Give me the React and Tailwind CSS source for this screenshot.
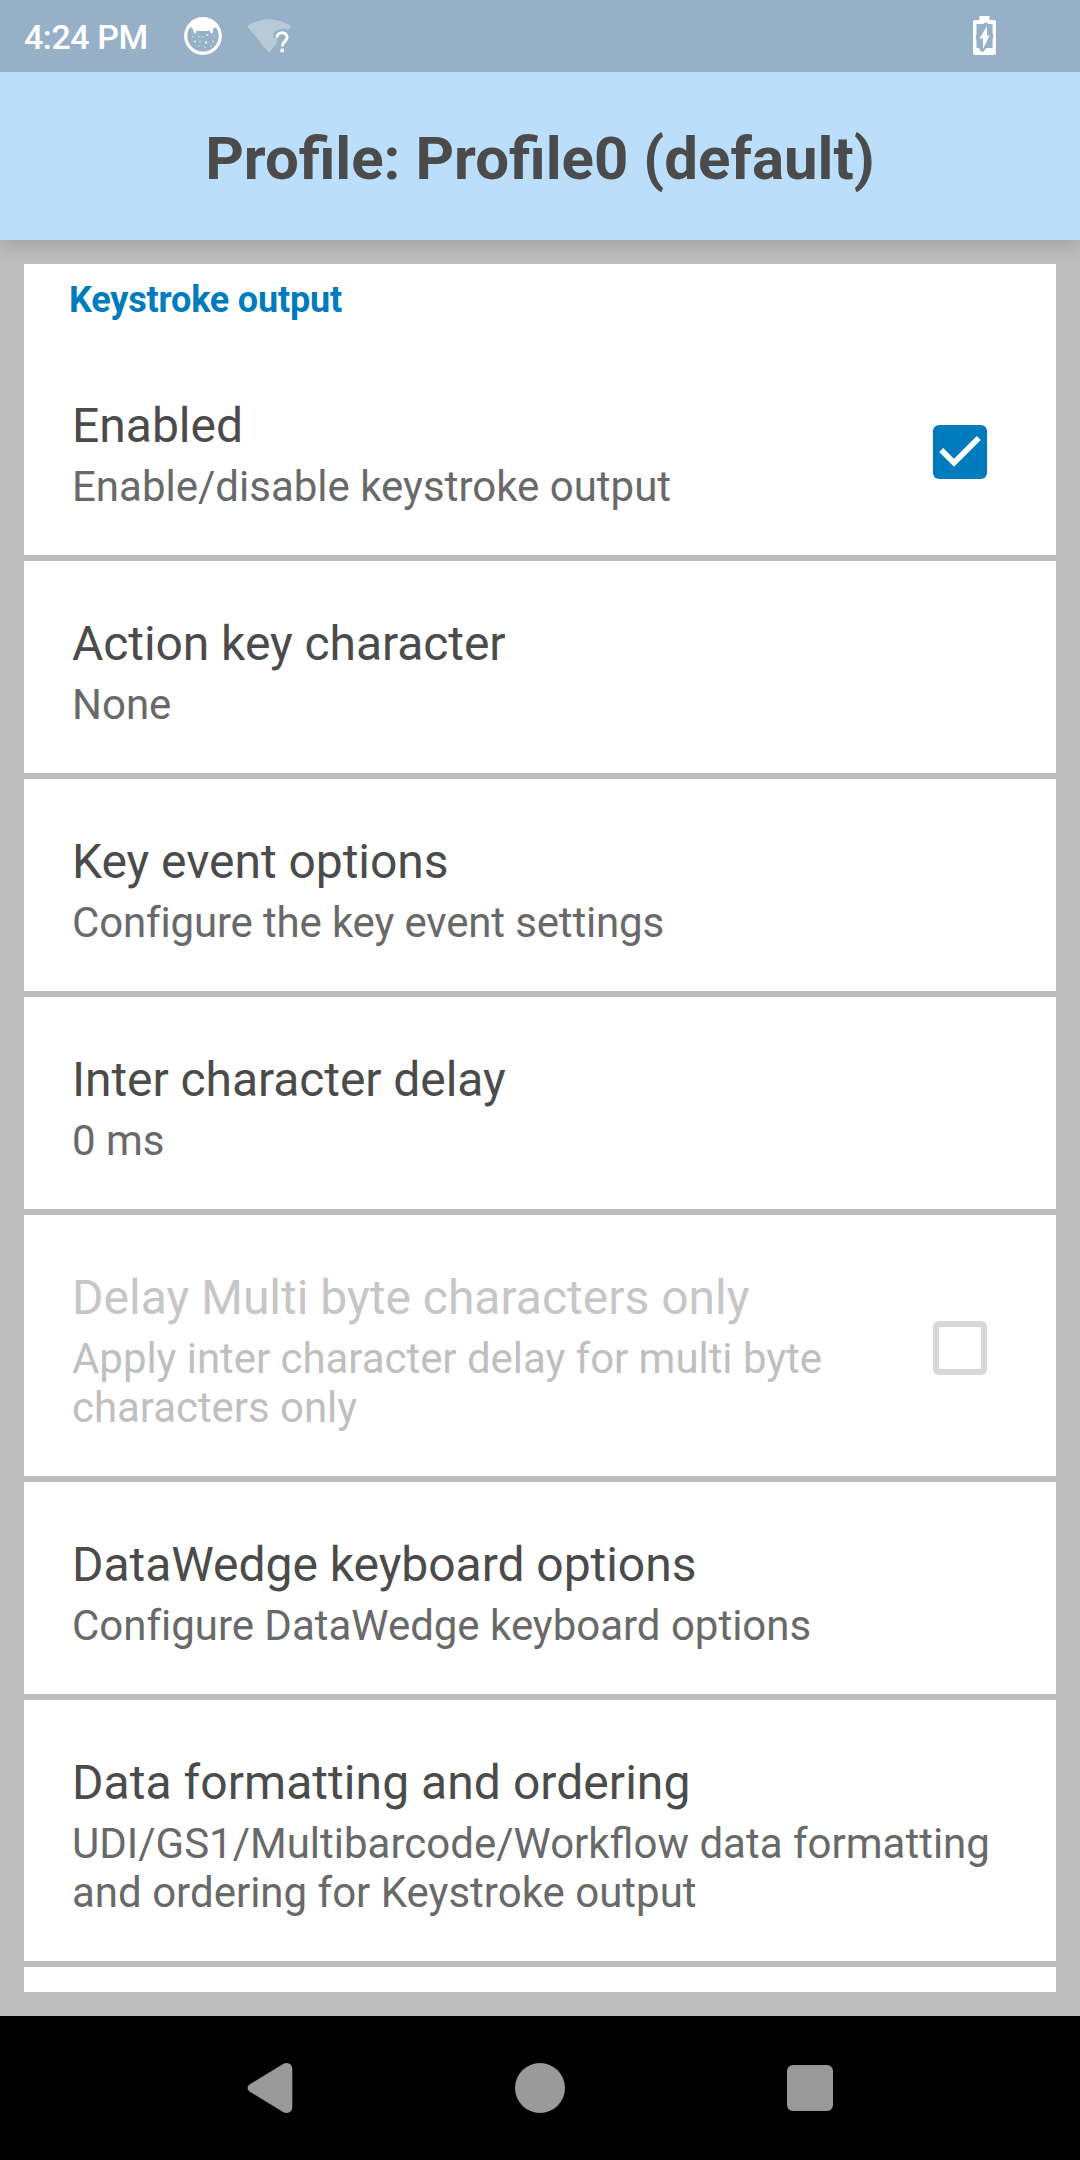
const ITEMS = [
  { title: 'Action key character', summary: ['None'], titleClass: 'tracking-[-0.07px]' },
  {
    title: 'Key event options',
    summary: ['Configure the key event settings'],
    titleClass: 'tracking-[-0.05px]',
    summaryClass: 'tracking-[-0.16px]',
  },
  { title: 'Inter character delay', summary: ['0 ms'], titleClass: 'tracking-[-0.07px]' },
  {
    title: 'Delay Multi byte characters only',
    summary: ['Apply inter character delay for multi byte', 'characters only'],
    summaryClass: 'tracking-[-0.05px]',
    disabled: true,
    checkbox: true,
  },
  {
    title: 'DataWedge keyboard options',
    summary: ['Configure DataWedge keyboard options'],
    titleClass: 'tracking-[-0.04px]',
    summaryClass: 'tracking-[-0.02px]',
  },
  {
    title: 'Data formatting and ordering',
    summary: ['UDI/GS1/Multibarcode/Workflow data formatting', 'and ordering for Keystroke output'],
    titleClass: 'tracking-[0.05px]',
  },
];

function Checkbox({ checked }) {
  return checked ? (
    <svg className="-mt-[4px] size-[54px] shrink-0" viewBox="0 0 54 54" role="checkbox" aria-checked="true">
      <rect width="54" height="54" rx="6" fill="#007cbe" />
      <path d="M8.200 25 21 37.800 45.800 13" fill="none" stroke="#fff" strokeWidth="5.600" />
    </svg>
  ) : (
    <div
      role="checkbox"
      aria-checked="false"
      className="-mt-[5px] size-[54px] shrink-0 rounded-[6px] border-6 border-[#d8d8d8]"
    />
  );
}

function Preference({ title, summary, disabled, checkbox, checked, titleClass = '', summaryClass = '' }) {
  return (
    <div className="flex items-center justify-between bg-white pt-[54px] pr-[69px] pb-[44px] pl-12">
      <div className="whitespace-nowrap">
        <div className={`text-[48px] leading-[57px] ${titleClass} ${disabled ? 'text-[#c6c6c6]' : 'text-[#4b4b4b]'}`}>
          {title}
        </div>
        <div
          className={`mt-2 text-[42px] leading-[49px] ${summaryClass} ${disabled ? 'text-[#bfbfbf]' : 'text-[#696969]'}`}
        >
          {summary.map((line) => (
            <div key={line}>{line}</div>
          ))}
        </div>
      </div>
      {checkbox && <Checkbox checked={checked} />}
    </div>
  );
}

function StatusBar() {
  return (
    <div className="relative z-10 flex h-[72px] items-center bg-[#96b0c7] pl-6 text-white">
      <div className="w-[160px] pt-[2px] text-[34px] leading-[40px] font-medium tracking-[-0.45px] whitespace-nowrap">
        4:24 PM
      </div>
      <svg className="h-[40px] w-[40px]" viewBox="0 0 40 40">
        <circle cx="19" cy="20" r="17.300" fill="none" stroke="#fff" strokeWidth="3.200" />
        <path
          d="M5.500 11.500Q9 3.500 19 3Q29 3.500 32.500 11.500L29.500 12 28.500 17.500Q26 17.500 25.500 14.500Q19 15.500 12.500 14.500L11.500 17.500Q9.500 17.500 9.500 15L8 11.500Z"
          fill="#fff"
        />
        <g fill="#fff" fillOpacity="0.700">
          <circle cx="23.500" cy="19.200" r="1.100" />
          <circle cx="22" cy="26.500" r="1.300" />
          <circle cx="11" cy="25.500" r="1.100" />
          <circle cx="15" cy="20.500" r=".8" />
          <circle cx="19" cy="21" r=".7" />
          <circle cx="29" cy="25.500" r=".9" />
          <circle cx="16" cy="25.500" r=".7" />
          <circle cx="27" cy="30" r=".7" />
          <circle cx="21" cy="31.500" r=".7" />
          <circle cx="15" cy="30" r=".7" />
          <circle cx="30" cy="20" r=".7" />
          <circle cx="8.500" cy="20.500" r=".7" />
        </g>
      </svg>
      <svg className="ml-[20px] h-[40px] w-[50px]" viewBox="0 0 50 40">
        <path d="M3 10Q24.500-3.500 47 10L44.500 14Q37 11 31.500 15.500Q29 18 29.500 22H34L32.500 27.500 25 37Z" fill="#b8c9d8" />
        <path
          d="M33 21.500C33 15 43 15 43 21.500C43 25.500 38.200 25.500 38.200 30.500"
          fill="none"
          stroke="#fff"
          strokeWidth="3"
        />
        <rect x="36.500" y="32.700" width="3.500" height="3.500" fill="#fff" />
      </svg>
      <svg className="mr-[83px] ml-auto h-[40px] w-[25px]" viewBox="0 0 25 40">
        <path d="M7.500 0h10v4H22q2 0 2 2v31q0 2-2 2H3q-2 0-2-2V6q0-2 2-2h4.500Z" fill="#fff" />
        <path d="M4.500 8H11q4-3 5.500 0H20.500v9l1 3-1 4v8H14q-4 8-7 0h-2.500v-8l-1-3 1-3Z" fill="#96b0c7" />
        <path d="M15 10v9.500h2.500L11 33V22.500H7.500Z" fill="#fff" />
      </svg>
    </div>
  );
}

export default function App() {
  return (
    <div className="flex h-[2160px] w-[1080px] flex-col overflow-hidden bg-[#bdbdbd] font-[Roboto,sans-serif]">
      <StatusBar />
      <header className="flex h-[168px] items-center justify-center bg-[#bbdefb] pt-[5px] shadow-[0_8px_16px_-2px_rgba(0,0,0,0.14)]">
        <h1 className="text-[60px] leading-[71px] font-bold whitespace-nowrap text-[#4b4b4b]">
          Profile: Profile0 (default)
        </h1>
      </header>
      <main className="m-6 flex h-[1728px] flex-col gap-[6px] overflow-hidden">
        <section>
          <h2 className="h-[79px] bg-white pt-[15px] pl-[45px] text-[36px] leading-[42px] font-bold tracking-[-0.18px] text-[#007cbe]">
            Keystroke output
          </h2>
          <Preference title="Enabled" summary={['Enable/disable keystroke output']} checkbox checked />
        </section>
        {ITEMS.map((item) => (
          <Preference key={item.title} {...item} />
        ))}
        <div className="h-[25px] shrink-0 bg-white" />
      </main>
      <nav className="grid h-[144px] grid-cols-[270px_270px_270px] place-items-center justify-center bg-black">
        <svg className="h-[50px] w-[46px]" viewBox="0 0 46 50">
          <path
            d="M2.500 21.500 36.500 0.800Q39 -0.500 42 0.500Q45.300 2 45.300 6V44Q45.300 48 42 49.500Q39 50.500 36.500 49.200L2.500 28.500Q-1.500 25 2.500 21.500Z"
            fill="#999"
          />
        </svg>
        <div className="size-[50px] rounded-full bg-[#999]" />
        <div className="size-[46px] rounded-[6px] bg-[#999]" />
      </nav>
    </div>
  );
}
